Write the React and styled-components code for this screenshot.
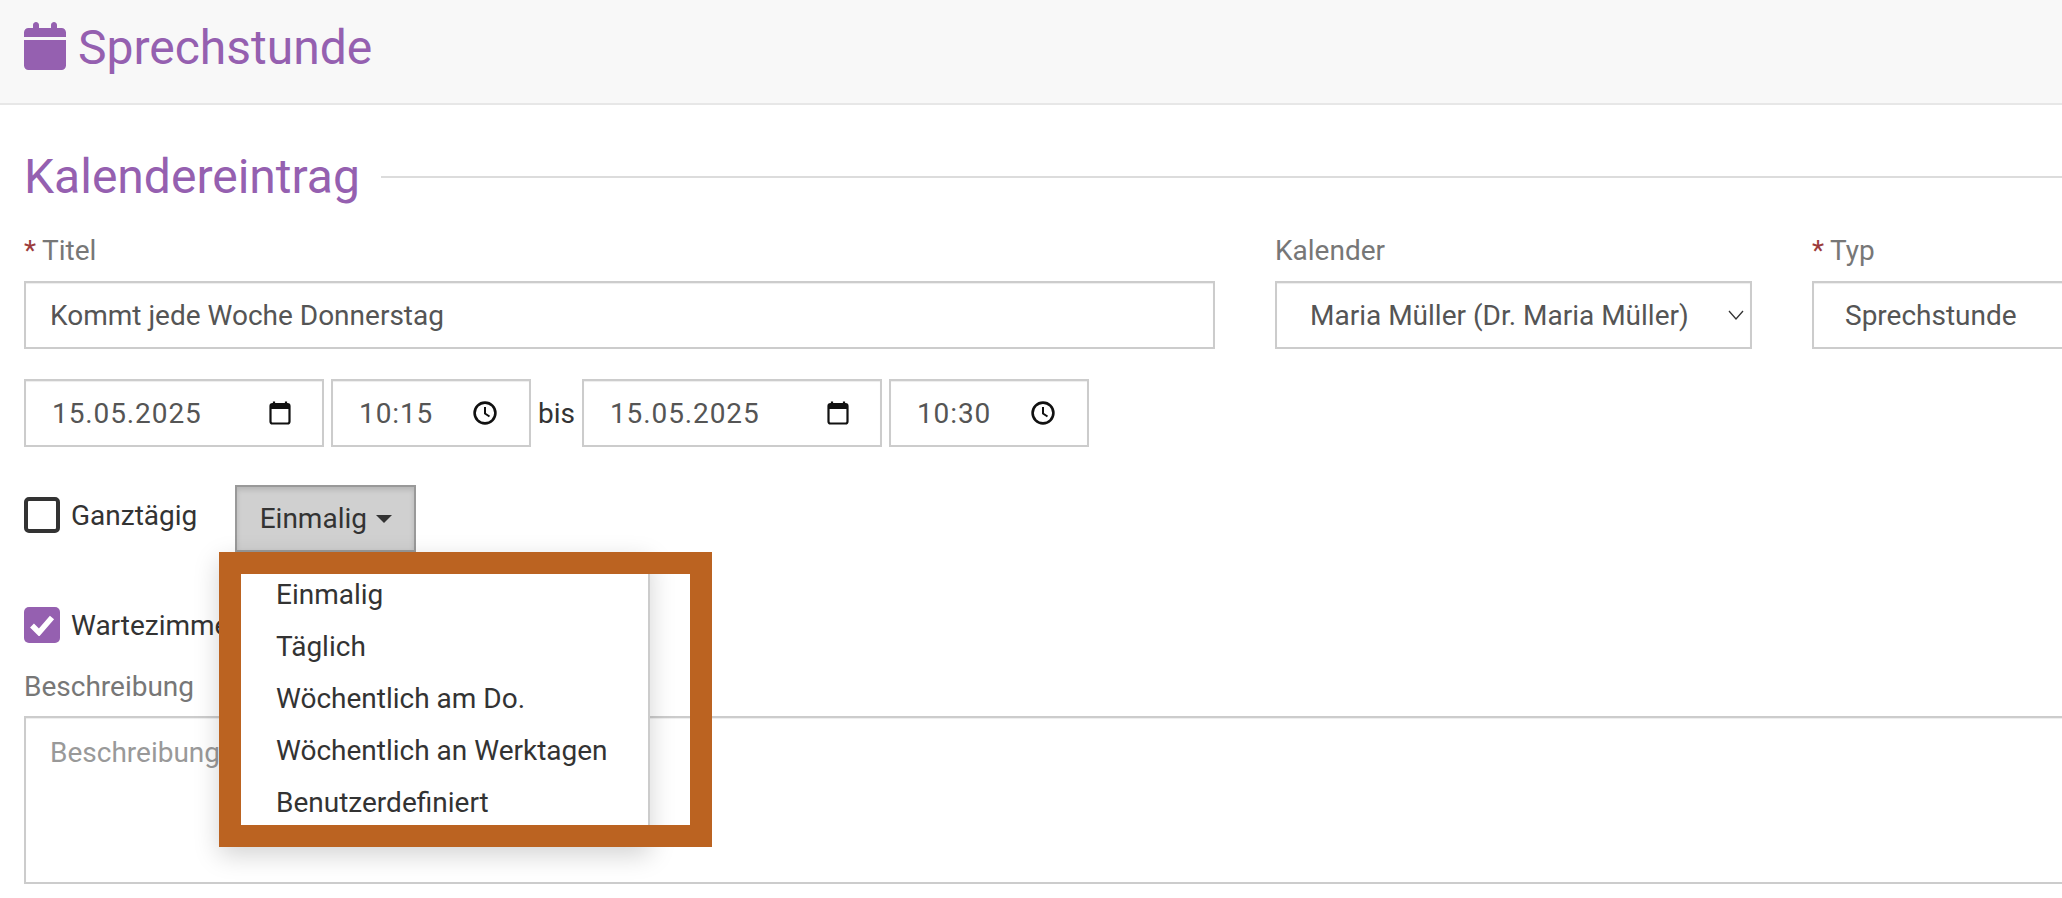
import React from "react";
import styled, { createGlobalStyle } from "styled-components";

const Global = createGlobalStyle`
  html, body { margin: 0; padding: 0; background: #fff; overflow: hidden; }
  body { font-family: Roboto, "Liberation Sans", sans-serif; }
  * { box-sizing: border-box; }
`;

const Page = styled.div`
  width: 2062px;
  height: 898px;
  overflow: hidden;
  position: relative;
`;
const Header = styled.header`
  height: 105px;
  background: #f8f8f8;
  border-bottom: 2px solid #e7e7e7;
  display: flex;
  align-items: center;
  gap: 12px;
  padding: 0 0 11px 24px;
`;
const PageTitle = styled.h1`
  margin: 4px 0 0;
  font-size: 48px;
  font-weight: 400;
  line-height: 56px;
  color: #9560b0;
`;
const Content = styled.main`
  width: 2300px;
  padding: 40px 0 0 24px;
`;
const SectionHead = styled.div`
  display: flex;
  align-items: center;
  gap: 21px;
  height: 64px;
`;
const SectionTitle = styled.h2`
  margin: 0;
  font-size: 48px;
  font-weight: 400;
  line-height: 56px;
  color: #9560b0;
`;
const Rule = styled.div`
  flex: 1;
  height: 2px;
  background: #dcdcdc;
`;
const FieldRow = styled.div`
  display: flex;
  gap: 60px;
  margin-top: 25px;
`;
const Field = styled.div`
  display: flex;
  flex-direction: column;
  width: ${(p) => p.$w}px;
  flex-shrink: 0;
`;
const Label = styled.label`
  display: block;
  height: 34px;
  margin-bottom: 13px;
  font-size: 28px;
  line-height: 34px;
  color: #777;
`;
const Star = styled.span`
  color: #9c3c3c;
  margin-right: 6px;
`;
const boxStyle = `
  height: 68px;
  border: 2px solid #ccc;
  box-shadow: inset 0 1px 1px rgba(0,0,0,.075);
  background: #fff;
  font-family: Roboto, sans-serif;
  font-size: 28px;
  color: #555;
`;
const TextBox = styled.input`
  ${boxStyle}
  width: 100%;
  padding: 0 24px;
  outline: none;
`;
const SelectBox = styled.div`
  ${boxStyle}
  display: flex;
  align-items: center;
  justify-content: space-between;
  white-space: nowrap;
  padding: 0 6px 0 ${(p) => p.$pl}px;
`;
const DateRow = styled.div`
  display: flex;
  align-items: center;
  gap: 7px;
  margin-top: 30px;
`;
const PickerBox = styled.div`
  ${boxStyle}
  width: ${(p) => p.$w}px;
  display: flex;
  align-items: center;
  justify-content: space-between;
  padding: 0 ${(p) => p.$pr}px 0 26px;
  letter-spacing: 0.9px;
`;
const Bis = styled.span`
  font-size: 28px;
  color: #333;
`;
const OptionRow = styled.div`
  display: flex;
  align-items: flex-start;
  margin-top: ${(p) => p.$mt}px;
`;
const CheckWrap = styled.div`
  display: flex;
  align-items: center;
  gap: 11px;
  height: 36px;
  margin-top: ${(p) => p.$mt || 0}px;
`;
const CheckBox = styled.span`
  width: 36px;
  height: 36px;
  border-radius: 5px;
  display: flex;
  align-items: center;
  justify-content: center;
  border: ${(p) => (p.$on ? "none" : "4px solid #333")};
  background: ${(p) => (p.$on ? "#9560b0" : "#fff")};
`;
const CheckLabel = styled.span`
  font-size: 28px;
  color: #333;
`;
const DropButton = styled.button`
  margin-left: 38px;
  width: 181px;
  height: 67px;
  background: #d0d0d0;
  border: 2px solid #999;
  box-shadow: inset 0 3px 5px rgba(0,0,0,.125);
  display: flex;
  align-items: center;
  justify-content: center;
  gap: 9px;
  font-family: Roboto, sans-serif;
  font-size: 28px;
  color: #333;
  padding: 0;
`;
const Caret = styled.span`
  width: 0;
  height: 0;
  border-left: 8px solid transparent;
  border-right: 8px solid transparent;
  border-top: 8px solid #333;
`;
const StackedLabel = styled(Label)`
  margin-top: 27px;
  margin-bottom: 12px;
`;
const TextArea = styled.textarea`
  ${boxStyle}
  display: block;
  width: 100%;
  height: 168px;
  padding: 18px 24px;
  resize: none;
  outline: none;
  &::placeholder { color: #999; opacity: 1; }
`;
const Menu = styled.ul`
  position: absolute;
  left: 219px;
  top: 552px;
  width: 431px;
  height: 295px;
  margin: 0;
  padding: 22px 0 0 0;
  list-style: none;
  background: #fff;
  border-right: 2px solid #ccc;
  box-shadow: 0 8px 24px rgba(0,0,0,.175);
  overflow: hidden;
`;
const MenuItem = styled.li`
  height: 52px;
  margin-top: ${(p) => (p.$first ? "-5px" : "0")};
  padding-left: 57px;
  font-size: 28px;
  line-height: 52px;
  color: #333;
  white-space: nowrap;
`;
const Highlight = styled.div`
  position: absolute;
  left: 219px;
  top: 552px;
  width: 493px;
  height: 295px;
  border: solid #bb6321;
  border-width: 22px;
  pointer-events: none;
`;

const CalendarSolid = () => (
  <svg width="42" height="48" viewBox="0 0 448 512" fill="#9560b0" aria-hidden="true">
    <path d="M128 0c17.7 0 32 14.3 32 32v32h128V32c0-17.7 14.300-32 32-32s32 14.300 32 32v32h48c26.500 0 48 21.500 48 48v48H0v-48c0-26.500 21.500-48 48-48h48V32c0-17.700 14.300-32 32-32zM0 192h448v272c0 26.500-21.500 48-48 48H48c-26.500 0-48-21.500-48-48V192z" />
  </svg>
);
const CalIcon = () => (
  <svg width="22" height="24" viewBox="0 0 22 24" aria-hidden="true">
    <path d="M5 0.500v3M17 0.500v3" stroke="#111" strokeWidth="2.200" />
    <rect x="1.500" y="3" width="19" height="19.500" rx="2" fill="none" stroke="#111" strokeWidth="2.200" />
    <rect x="1.500" y="3" width="19" height="5" fill="#111" />
  </svg>
);
const ClockIcon = () => (
  <svg width="24" height="24" viewBox="0 0 24 24" fill="none" stroke="#111" aria-hidden="true">
    <circle cx="12" cy="12" r="10.400" strokeWidth="2.600" />
    <path d="M12 6v6.500l4.500 3" strokeWidth="2" />
  </svg>
);
const Chevron = () => (
  <svg width="16" height="10" viewBox="0 0 16 10" fill="none" stroke="#333" strokeWidth="1.300" aria-hidden="true">
    <path d="M1 1l7 8 7-8" />
  </svg>
);
const Check = () => (
  <svg width="26" height="22" viewBox="0 0 26 22" fill="none" stroke="#fff" strokeWidth="5.500" aria-hidden="true">
    <path d="M3 11.500l7 7L23 3.500" />
  </svg>
);

const items = ["Einmalig", "Täglich", "Wöchentlich am Do.", "Wöchentlich an Werktagen", "Benutzerdefiniert"];

export default function App() {
  return (
    <Page>
      <Global />
      <Header>
        <CalendarSolid />
        <PageTitle>Sprechstunde</PageTitle>
      </Header>
      <Content>
        <SectionHead>
          <SectionTitle>Kalendereintrag</SectionTitle>
          <Rule />
        </SectionHead>
        <FieldRow>
          <Field $w={1191}>
            <Label><Star>*</Star>Titel</Label>
            <TextBox readOnly value="Kommt jede Woche Donnerstag" />
          </Field>
          <Field $w={477}>
            <Label>Kalender</Label>
            <SelectBox $pl={33}>Maria Müller (Dr. Maria Müller)<Chevron /></SelectBox>
          </Field>
          <Field $w={400}>
            <Label><Star>*</Star>Typ</Label>
            <SelectBox $pl={31}>Sprechstunde</SelectBox>
          </Field>
        </FieldRow>
        <DateRow>
          <PickerBox $w={300} $pr={31}>15.05.2025<CalIcon /></PickerBox>
          <PickerBox $w={200} $pr={32}>10:15<ClockIcon /></PickerBox>
          <Bis>bis</Bis>
          <PickerBox $w={300} $pr={31}>15.05.2025<CalIcon /></PickerBox>
          <PickerBox $w={200} $pr={32}>10:30<ClockIcon /></PickerBox>
        </DateRow>
        <OptionRow $mt={38}>
          <CheckWrap $mt={12}>
            <CheckBox />
            <CheckLabel>Ganztägig</CheckLabel>
          </CheckWrap>
          <DropButton>Einmalig<Caret /></DropButton>
        </OptionRow>
        <OptionRow $mt={0}>
          <CheckWrap $mt={55}>
            <CheckBox $on><Check /></CheckBox>
            <CheckLabel>Wartezimmer</CheckLabel>
          </CheckWrap>
        </OptionRow>
        <StackedLabel>Beschreibung</StackedLabel>
        <TextArea placeholder="Beschreibung" />
      </Content>
      <Menu>
        {items.map((t, i) => <MenuItem key={t} $first={i === 0}>{t}</MenuItem>)}
      </Menu>
      <Highlight />
    </Page>
  );
}
